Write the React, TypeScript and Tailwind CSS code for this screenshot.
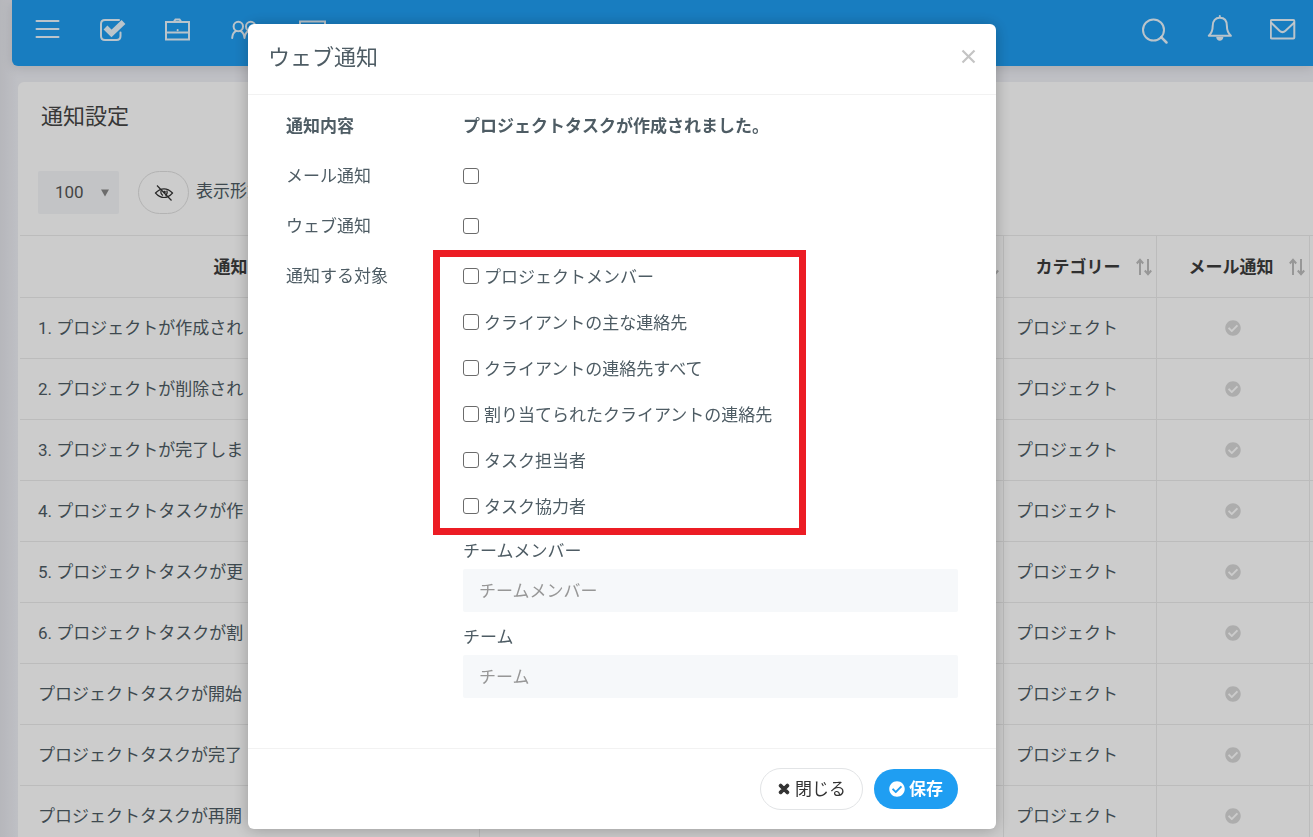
import React from "react";
import { FaCheckCircle, FaTimes } from "react-icons/fa";

const rows = [
  "1. プロジェクトが作成され",
  "2. プロジェクトが削除され",
  "3. プロジェクトが完了しま",
  "4. プロジェクトタスクが作",
  "5. プロジェクトタスクが更",
  "6. プロジェクトタスクが割",
  "プロジェクトタスクが開始",
  "プロジェクトタスクが完了",
  "プロジェクトタスクが再開",
];

const targets = [
  "プロジェクトメンバー",
  "クライアントの主な連絡先",
  "クライアントの連絡先すべて",
  "割り当てられたクライアントの連絡先",
  "タスク担当者",
  "タスク協力者",
];

function BarButton({ label, children }: { label: string; children: React.ReactNode }) {
  return (
    <button type="button" aria-label={label} className="text-white/90">
      <svg width="30" height="30" viewBox="0 0 30 30" fill="none" stroke="currentColor" strokeWidth="2" strokeLinecap="round" strokeLinejoin="round">
        {children}
      </svg>
    </button>
  );
}

function SortIcon() {
  return (
    <svg width="16" height="18" viewBox="0 0 16 18" fill="none" stroke="#bdbdbd" strokeWidth="2" className="shrink-0">
      <path d="M4 17V2M0.8 5.5L4 1.8L7.2 5.5M12 1V16M8.8 12.5L12 16.2L15.2 12.5" />
    </svg>
  );
}

function HeadCell({ children }: { children?: React.ReactNode }) {
  return (
    <th className="border-y border-r border-[#ebebeb] pr-1 font-bold text-[#3c3c3c]">
      <div className="flex items-center">
        <span className="flex-1 pl-4 text-center">{children}</span>
        <SortIcon />
      </div>
    </th>
  );
}

function Box({ id }: { id: string }) {
  return (
    <input
      id={id}
      type="checkbox"
      className="size-4 shrink-0 appearance-none rounded-[3px] border border-[#6b6b6b] bg-white checked:bg-[#1d9bf0]"
    />
  );
}

function TopBar() {
  return (
    <header className="relative ml-3 flex h-[66px] items-center justify-between rounded-bl-md bg-[#1f9df1] pr-[13px] pb-1.5 pl-5 shadow-[0_2px_12px_rgba(0,0,0,0.12)]">
      <nav className="flex gap-9">
        <BarButton label="メニュー">
          <path d="M4.5 6H26.5M4.5 14H26.5M4.5 22H26.5" />
        </BarButton>
        <BarButton label="タスク">
          <path d="M21 5H7Q3 5 3 9V21Q3 25 7 25H18.500Q22.500 25 22.500 21V17.500" />
          <path d="M7.500 12.500L13.500 18.500L25.500 7" strokeWidth="5.500" strokeLinecap="butt" strokeLinejoin="miter" />
        </BarButton>
        <BarButton label="プロジェクト">
          <path d="M2 7H25V24.500H2ZM2 17.500H25M10 6.500L11.500 4.500H15.500L17 6.500" strokeLinejoin="miter" />
          <path d="M13.600 15V15.200" />
        </BarButton>
        <BarButton label="顧客">
          <circle cx="8.300" cy="11.500" r="4.700" />
          <circle cx="20.700" cy="11.500" r="4.700" />
          <path d="M2.200 23Q2.500 18 5.800 16.200M10.800 16.200Q14 18 14.500 23Q15 18 18.200 16.200M23.200 16.200Q26.500 18 26.800 23" />
        </BarButton>
        <BarButton label="画面">
          <path d="M4 6.500H29V23H4Z" strokeLinejoin="miter" />
        </BarButton>
      </nav>
      <div className="flex gap-[35px]">
        <BarButton label="検索">
          <circle cx="13.500" cy="15" r="10.500" />
          <path d="M21.200 22.200L26.500 27.500" strokeWidth="2.500" />
        </BarButton>
        <BarButton label="お知らせ">
          <path d="M14.800 1V2.500M3.800 20.800C6.800 18 7.700 15.500 7.700 11C7.700 5.500 10.500 2.800 14.800 2.800S21.900 5.500 21.900 11C21.900 15.500 22.800 18 25.900 20.800Z" />
          <path d="M11.200 22H18.400Q17.800 25.800 14.800 25.800T11.200 22Z" fill="currentColor" stroke="none" />
        </BarButton>
        <BarButton label="メール">
          <rect x="0.800" y="5" width="23.500" height="18.500" rx="1" />
          <path d="M1.500 8L9.500 15.800Q12.500 18.500 15.500 15.800L23.800 8" />
        </BarButton>
      </div>
    </header>
  );
}

function SettingsCard() {
  return (
    <main className="mt-4 ml-[18px] rounded-tl-md bg-white pl-0.5">
      <h1 className="pt-[19px] pl-[21px] text-[22px] leading-8 text-[#454545]">通知設定</h1>
      <div className="mt-[38px] flex items-center pl-[18px]">
        <div className="relative">
          <select aria-label="表示件数" className="h-[43px] w-[81px] appearance-none rounded-xs bg-[#f4f6f8] pb-0.5 pl-[17px] text-[#555]">
            <option>100</option>
          </select>
          <svg width="10" height="8" viewBox="0 0 10 8" className="pointer-events-none absolute top-[18px] right-[9px]">
            <path d="M1 0.500H9L5 7.500Z" fill="#888" />
          </svg>
        </div>
        <button type="button" aria-label="表示項目" className="mr-[7px] ml-[19px] flex h-[43px] w-[51px] items-center justify-center rounded-full border border-[#e0e0e0] text-[#333]">
          <svg width="20" height="20" viewBox="0 0 20 20" fill="none" stroke="currentColor" strokeWidth="1.200">
            <path d="M1.500 10Q5.500 5.800 10 5.800T18.500 10Q14.500 14.500 10 14.500T1.500 10Z" />
            <path d="M7.200 7.500Q6 10.500 9 12.500M12.800 7.500Q14 10.500 11.500 12.500" />
            <circle cx="10.500" cy="9" r="1.300" fill="currentColor" stroke="none" />
            <path d="M3 2.500L17.500 17.500" />
          </svg>
        </button>
        <span className="pb-1 text-[#4e5c64]">表示形式</span>
      </div>
      <table className="mt-[21px] w-full table-fixed border-separate border-spacing-0">
        <colgroup>
          <col className="w-[460px]" />
          <col />
          <col className="w-[153px]" />
          <col className="w-[153px]" />
          <col className="w-[3px]" />
        </colgroup>
        <thead>
          <tr className="h-[63px]">
            <HeadCell>通知内容</HeadCell>
            <HeadCell />
            <HeadCell>カテゴリー</HeadCell>
            <HeadCell>メール通知</HeadCell>
            <td className="border-y border-[#ebebeb]" />
          </tr>
        </thead>
        <tbody>
          {rows.map((r) => (
            <tr key={r} className="h-[61px] text-[#4e5c64]">
              <td className="border-r border-b border-[#ebebeb] pl-[18px]">{r}</td>
              <td className="border-r border-b border-[#ebebeb]" />
              <td className="border-r border-b border-[#ebebeb] pl-3">プロジェクト</td>
              <td className="border-r border-b border-[#ebebeb]">
                <FaCheckCircle className="mx-auto size-4 text-[#d9d9d9]" />
              </td>
              <td className="border-b border-[#ebebeb]" />
            </tr>
          ))}
        </tbody>
      </table>
    </main>
  );
}

function NotificationDialog() {
  return (
    <div className="fixed inset-0 flex items-start justify-center bg-black/20 pt-6 pr-[69px]">
      <form role="dialog" aria-labelledby="dialog-title" className="w-full max-w-[748px] rounded-md bg-white text-[#4e5c64] shadow-[0_1px_16px_rgba(0,0,0,0.25)]">
        <div className="flex h-[71px] items-center justify-between border-b border-[#f2f2f2] px-5 pb-1.5">
          <h2 id="dialog-title" className="pt-1 text-[22px] leading-8">ウェブ通知</h2>
          <button type="button" aria-label="閉じる" className="text-[#c4c4c4]">
            <svg width="15" height="15" viewBox="0 0 15 15" stroke="currentColor" strokeWidth="2.200">
              <path d="M1.500 1.500L13.500 13.500M13.500 1.500L1.500 13.500" />
            </svg>
          </button>
        </div>
        <div className="px-[38px] pt-[5px] pb-[50px]">
          <div className="flex h-[51px] items-center font-bold">
            <span className="w-[177px]">通知内容</span>
            <span>プロジェクトタスクが作成されました。</span>
          </div>
          <div className="flex h-[50px] items-center">
            <label htmlFor="mail" className="w-[177px]">メール通知</label>
            <Box id="mail" />
          </div>
          <div className="flex h-[50px] items-center">
            <label htmlFor="web" className="w-[177px]">ウェブ通知</label>
            <Box id="web" />
          </div>
          <div className="flex pt-0.5">
            <span className="w-[177px] shrink-0 leading-[46px]">通知する対象</span>
            <div className="flex-1">
              <div className="relative">
                {targets.map((t, i) => (
                  <div key={t} className="flex h-[46px] items-center gap-[5px]">
                    <Box id={`target-${i}`} />
                    <label htmlFor={`target-${i}`} className="pt-0.5">{t}</label>
                  </div>
                ))}
                <div className="pointer-events-none absolute -top-[3px] -left-[30px] h-[285px] w-[373px] border-7 border-[#ec1c24]" />
              </div>
              <label htmlFor="members" className="mt-[10px] mb-1.5 block leading-6">チームメンバー</label>
              <input id="members" placeholder="チームメンバー" className="block h-[43px] w-full rounded-xs bg-[#f6f8fa] px-4 placeholder:text-[#979797]" />
              <label htmlFor="team" className="mt-[13px] mb-1.5 block leading-6">チーム</label>
              <input id="team" placeholder="チーム" className="block h-[43px] w-full rounded-xs bg-[#f6f8fa] px-4 placeholder:text-[#979797]" />
            </div>
          </div>
        </div>
        <div className="flex h-[81px] items-center justify-end gap-[11px] border-t border-[#f2f2f2] pr-[38px]">
          <button type="button" className="flex h-[42px] items-center gap-1 rounded-full border border-[#e2e4e6] px-4 text-[#333]">
            <FaTimes className="size-[14px]" strokeWidth="40" stroke="currentColor" />
            閉じる
          </button>
          <button type="submit" className="flex h-10 items-center gap-1 rounded-full bg-[#1f9ef2] px-[15px] font-bold text-white">
            <FaCheckCircle className="size-4" />
            保存
          </button>
        </div>
      </form>
    </div>
  );
}

export default function App() {
  return (
    <div className="h-screen overflow-hidden bg-[linear-gradient(to_right,#e4e5eb,#eff0f6_18px)] font-[Roboto,'Noto_Sans_CJK_JP',sans-serif] text-[17px] leading-6">
      <TopBar />
      <SettingsCard />
      <NotificationDialog />
    </div>
  );
}
